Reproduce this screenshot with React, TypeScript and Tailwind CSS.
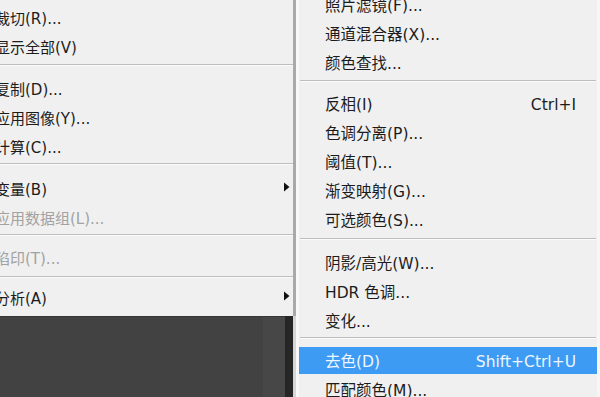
import React from "react";

type Item =
  | { kind: "row"; label: string; shortcut?: string; disabled?: boolean; sub?: boolean; active?: boolean }
  | { kind: "sep"; h: number; t: number };

const leftItems: Item[] = [
  { kind: "row", label: "裁切(R)..." },
  { kind: "row", label: "显示全部(V)" },
  { kind: "sep", h: 13, t: 3 },
  { kind: "row", label: "复制(D)..." },
  { kind: "row", label: "应用图像(Y)..." },
  { kind: "row", label: "计算(C)..." },
  { kind: "sep", h: 13, t: 2 },
  { kind: "row", label: "变量(B)", sub: true },
  { kind: "row", label: "应用数据组(L)...", disabled: true },
  { kind: "sep", h: 11, t: 2 },
  { kind: "row", label: "陷印(T)...", disabled: true },
  { kind: "sep", h: 11, t: 4 },
  { kind: "row", label: "分析(A)", sub: true },
];

const rightItems: Item[] = [
  { kind: "row", label: "照片滤镜(F)..." },
  { kind: "row", label: "通道混合器(X)..." },
  { kind: "row", label: "颜色查找..." },
  { kind: "sep", h: 12, t: 3 },
  { kind: "row", label: "反相(I)", shortcut: "Ctrl+I" },
  { kind: "row", label: "色调分离(P)..." },
  { kind: "row", label: "阈值(T)..." },
  { kind: "row", label: "渐变映射(G)..." },
  { kind: "row", label: "可选颜色(S)..." },
  { kind: "sep", h: 14, t: 4 },
  { kind: "row", label: "阴影/高光(W)..." },
  { kind: "row", label: "HDR 色调..." },
  { kind: "row", label: "变化..." },
  { kind: "sep", h: 11, t: 2 },
  { kind: "row", label: "去色(D)", shortcut: "Shift+Ctrl+U", active: true },
  { kind: "row", label: "匹配颜色(M)..." },
];

function Sep({ h, t, inset }: { h: number; t: number; inset?: boolean }) {
  return (
    <div style={{ height: h, paddingTop: t }} className={inset ? "px-[1px]" : ""}>
      <div className="h-[1px] bg-[#bdbdbd]" />
      <div className="h-[1px] bg-[#fbfbfb]" />
    </div>
  );
}

function Arrow() {
  return (
    <svg width="7" height="10" viewBox="0 0 7 10" className="shrink-0 mb-[8px]">
      <path d="M1 0.5 L6.5 5 L1 9.5 Z" fill="#111" />
    </svg>
  );
}

export default function App() {
  return (
    <div className="w-[600px] h-[397px] overflow-hidden flex bg-[#f0f0f0] font-['DejaVu_Sans','Noto_Sans_CJK_SC',sans-serif] text-[15px] leading-none">
      {/* Left column */}
      <div className="w-[296px] shrink-0 flex flex-col">
        <div className="h-[316px] bg-[#f0f0f0] border-r-[3px] border-[#a9a9a9] pt-[3px] overflow-hidden">
          {leftItems.map((it, i) =>
            it.kind === "sep" ? (
              <Sep key={i} h={it.h} t={it.t} />
            ) : (
              <div key={i} className="h-[29px] pt-[4px] flex items-center pr-[3px]">
                <span
                  className={
                    "ml-[-5px] whitespace-nowrap " +
                    (it.disabled ? "text-[#a2a2a2]" : "text-[#1c1c1c]")
                  }
                >
                  {it.label}
                </span>
                <div className="flex-1" />
                {it.sub && <Arrow />}
              </div>
            )
          )}
        </div>
        <div className="flex-1 flex border-r-[3px] border-[#d6d6d6]">
          <div className="flex-1 bg-[#424242] border-t border-[#363636]" />
          <div className="w-[22px] bg-[#474747] border-t border-[#363636]" />
          <div className="w-[8px] bg-[#262626]" />
        </div>
      </div>

      {/* Right menu */}
      <div className="flex-1 border-l-[3px] border-[#f8f8f8] border-r-[3px] border-r-[#f6f6f6] bg-[#f0f0f0] overflow-hidden">
        <div className="mt-[-10px] text-[15.5px]">
          {rightItems.map((it, i) =>
            it.kind === "sep" ? (
              <Sep key={i} h={it.h} t={it.t} inset />
            ) : (
              <div key={i} className="h-[29px] py-[1px]">
                <div
                  className={
                    "h-full pt-[4px] flex items-center pl-[26px] pr-[21px] " +
                    (it.active ? "bg-[#3d9bf3] text-[#eef6ff]" : "text-[#1c1c1c]")
                  }
                >
                  <span className="whitespace-nowrap">{it.label}</span>
                  <div className="flex-1" />
                  {it.shortcut && <span className="whitespace-nowrap">{it.shortcut}</span>}
                </div>
              </div>
            )
          )}
        </div>
      </div>
    </div>
  );
}
